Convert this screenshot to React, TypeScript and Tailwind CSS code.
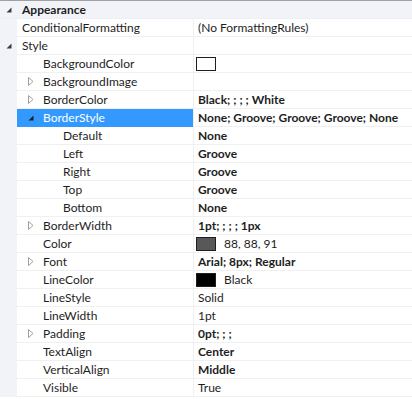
import React from "react";

type Row = {
  name: string;
  level: number;
  expander?: "open" | "closed";
  value?: string;
  bold?: boolean;
  swatch?: string;
  category?: boolean;
  selected?: boolean;
};

const rows: Row[] = [
  { name: "Appearance", level: 0, expander: "open", category: true },
  { name: "ConditionalFormatting", level: 0, value: "(No FormattingRules)" },
  { name: "Style", level: 0, expander: "open" },
  { name: "BackgroundColor", level: 1, swatch: "#ffffff" },
  { name: "BackgroundImage", level: 1, expander: "closed" },
  { name: "BorderColor", level: 1, expander: "closed", value: "Black; ; ; ; White", bold: true },
  { name: "BorderStyle", level: 1, expander: "open", value: "None; Groove; Groove; Groove; None", bold: true, selected: true },
  { name: "Default", level: 2, value: "None", bold: true },
  { name: "Left", level: 2, value: "Groove", bold: true },
  { name: "Right", level: 2, value: "Groove", bold: true },
  { name: "Top", level: 2, value: "Groove", bold: true },
  { name: "Bottom", level: 2, value: "None", bold: true },
  { name: "BorderWidth", level: 1, expander: "closed", value: "1pt; ; ; ; 1px", bold: true },
  { name: "Color", level: 1, swatch: "#58585b", value: "88, 88, 91" },
  { name: "Font", level: 1, expander: "closed", value: "Arial; 8px; Regular", bold: true },
  { name: "LineColor", level: 1, swatch: "#000000", value: "Black" },
  { name: "LineStyle", level: 1, value: "Solid" },
  { name: "LineWidth", level: 1, value: "1pt" },
  { name: "Padding", level: 1, expander: "closed", value: "0pt; ; ;", bold: true },
  { name: "TextAlign", level: 1, value: "Center", bold: true },
  { name: "VerticalAlign", level: 1, value: "Middle", bold: true },
  { name: "Visible", level: 1, value: "True" },
];

function OpenArrow({ color }: { color: string }) {
  return (
    <svg width="6" height="6" viewBox="0 0 6 6">
      <path d="M5.5 0.5 L5.5 5.5 L0.5 5.5 Z" fill={color} />
    </svg>
  );
}

function ClosedArrow() {
  return (
    <svg width="6" height="9" viewBox="0 0 6 9">
      <path d="M0.5 0.5 L5 4.5 L0.5 8.5 Z" fill="none" stroke="#a0a0a0" strokeWidth="1" />
    </svg>
  );
}

export default function App() {
  return (
    <div
      className="w-[412px] h-[399px] bg-white overflow-hidden border-t border-[#a0a0a0] text-[12px] text-[#1e1e1e]"
      style={{ fontFamily: 'Lato, "Noto Sans", sans-serif' }}
    >
      {rows.map((r, i) => {
        if (r.category) {
          return (
            <div key={i} className="flex h-[18px] items-center bg-[#f1f3f8] border-b border-[#eceff4]">
              <div className="w-[17px] flex justify-center items-center">
                <OpenArrow color="#3c3c3c" />
              </div>
              <span className="pl-[5px] font-bold leading-none">{r.name}</span>
            </div>
          );
        }
        return (
          <div key={i} className="flex h-[18px]">
            <div className="w-[17px] shrink-0 bg-[#f1f3f8] flex items-center justify-center">
              {r.level === 0 && r.expander === "open" ? <OpenArrow color="#3c3c3c" /> : null}
            </div>
            <div
              className={`w-[176px] shrink-0 flex items-center border-b ${
                r.selected ? "bg-[#3399ff] text-white border-[#3399ff]" : "border-[#f0f0f0]"
              }`}
            >
              {r.level === 0 && <span className="pl-[5px] leading-none">{r.name}</span>}
              {r.level === 1 && (
                <>
                  <div className="w-[26px] shrink-0 flex items-center justify-center pl-[1px]">
                    {r.expander === "closed" && <ClosedArrow />}
                    {r.expander === "open" && <OpenArrow color={r.selected ? "#1e1e1e" : "#3c3c3c"} />}
                  </div>
                  <span className="leading-none">{r.name}</span>
                </>
              )}
              {r.level === 2 && <span className="pl-[46px] leading-none">{r.name}</span>}
            </div>
            <div className="w-px shrink-0 bg-[#f0f0f0]" />
            <div className="flex-1 flex items-center border-b border-[#f0f0f0] pl-[4px] whitespace-nowrap">
              {r.swatch && (
                <span
                  className="w-[20px] h-[14px] border border-[#1e1e1e] shrink-0 -ml-[2px] mr-[8px]"
                  style={{ backgroundColor: r.swatch }}
                />
              )}
              {r.value && <span className={`leading-none ${r.bold ? "font-bold" : ""}`}>{r.value}</span>}
            </div>
          </div>
        );
      })}
    </div>
  );
}
